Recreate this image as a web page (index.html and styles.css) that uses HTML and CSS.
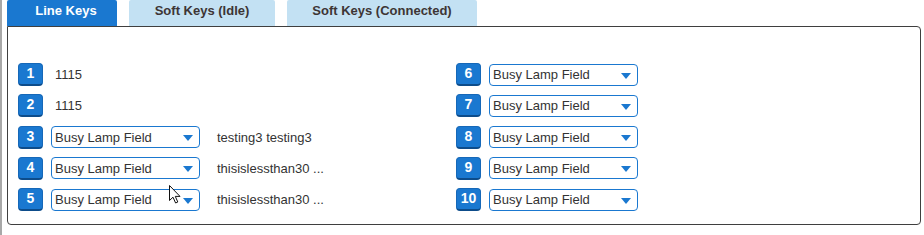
FILE: index.html
```html
<!DOCTYPE html>
<html>
<head>
<meta charset="utf-8">
<link rel="stylesheet" href="styles.css">
</head>
<body>
<div class="frame">
  <div class="tabs">
    <div class="tab tab-active tab-line">Line Keys</div>
    <div class="tab tab-idle">Soft Keys (Idle)</div>
    <div class="tab tab-conn">Soft Keys (Connected)</div>
  </div>
  <div class="panel">
    <div class="col col-left">
      <div class="row"><span class="badge">1</span><span class="plain">1115</span></div>
      <div class="row"><span class="badge">2</span><span class="plain">1115</span></div>
      <div class="row"><span class="badge">3</span><div class="select"><span>Busy Lamp Field</span><i class="arrow"></i></div><span class="label">testing3 testing3</span></div>
      <div class="row"><span class="badge">4</span><div class="select"><span>Busy Lamp Field</span><i class="arrow"></i></div><span class="label">thisislessthan30 ...</span></div>
      <div class="row"><span class="badge">5</span><div class="select"><span>Busy Lamp Field</span><i class="arrow"></i></div><span class="label">thisislessthan30 ...</span></div>
    </div>
    <div class="col col-right">
      <div class="row"><span class="badge">6</span><div class="select"><span>Busy Lamp Field</span><i class="arrow"></i></div></div>
      <div class="row"><span class="badge">7</span><div class="select"><span>Busy Lamp Field</span><i class="arrow"></i></div></div>
      <div class="row"><span class="badge">8</span><div class="select"><span>Busy Lamp Field</span><i class="arrow"></i></div></div>
      <div class="row"><span class="badge">9</span><div class="select"><span>Busy Lamp Field</span><i class="arrow"></i></div></div>
      <div class="row"><span class="badge">10</span><div class="select"><span>Busy Lamp Field</span><i class="arrow"></i></div></div>
    </div>
  </div>
  <svg class="cursor" width="13" height="19" viewBox="0 0 13 19"><path d="M0.5 0.5 L0.5 15.5 L4 12.2 L6.6 18 L8.8 17 L6.3 11.4 L11 11.4 Z" fill="#fff" stroke="#111" stroke-width="1" stroke-linejoin="miter"/></svg>
</div>
</body>
</html>
```
FILE: styles.css
```css
html, body {
  margin: 0;
  padding: 0;
  background: #fff;
}
body {
  font-family: "Liberation Sans", Arial, sans-serif;
  font-size: 13px;
  color: #333;
}
.frame {
  position: relative;
  box-sizing: border-box;
  height: 235px;
  border-left: 2px solid #a8a8a8;
  padding: 0 3px 0 5px;
}
.tabs {
  display: flex;
  gap: 12px;
  height: 26px;
}
.tab {
  box-sizing: border-box;
  height: 26px;
  padding-top: 3px;
  line-height: 16px;
  text-align: center;
  font-weight: bold;
  font-size: 13px;
  border-radius: 2px 2px 0 0;
  background: #c3e1f3;
  color: #3d3535;
}
.tab-active {
  background: #1a78d0;
  color: #fff;
  padding-left: 8px;
}
.tab-line { width: 110px; }
.tab-idle { width: 146px; }
.tab-conn { width: 190px; }
.panel {
  box-sizing: border-box;
  height: 199px;
  border: 1px solid #3f3f3f;
  border-radius: 0 4px 4px 4px;
  padding: 36px 10px 0 10px;
  display: flex;
}
.col {
  display: flex;
  flex-direction: column;
  gap: 8.25px;
}
.col-left { width: 438px; }
.row {
  display: flex;
  align-items: center;
  height: 23px;
}
.badge {
  box-sizing: border-box;
  width: 25px;
  height: 23px;
  flex: none;
  background: #1a78d0;
  border: 1px solid #1668b8;
  border-bottom: 2px solid #0d4c8a;
  border-radius: 4px;
  color: #fff;
  font-weight: bold;
  font-size: 14px;
  line-height: 18px;
  text-align: center;
  margin-right: 8px;
}
.plain {
  padding-left: 4px;
}
.select {
  box-sizing: border-box;
  width: 149px;
  height: 22px;
  border: 1px solid #1a78d0;
  border-radius: 4px;
  background: #fff;
  display: flex;
  align-items: center;
  justify-content: space-between;
  padding: 0 6px 0 3px;
  color: #333;
  font-size: 13px;
}
.arrow {
  width: 0;
  height: 0;
  border-left: 5.5px solid transparent;
  border-right: 5.5px solid transparent;
  border-top: 6px solid #1a78d0;
  margin-top: 2px;
}
.label {
  margin-left: 17px;
}
.cursor {
  position: absolute;
  left: 167px;
  top: 185px;
}
```
